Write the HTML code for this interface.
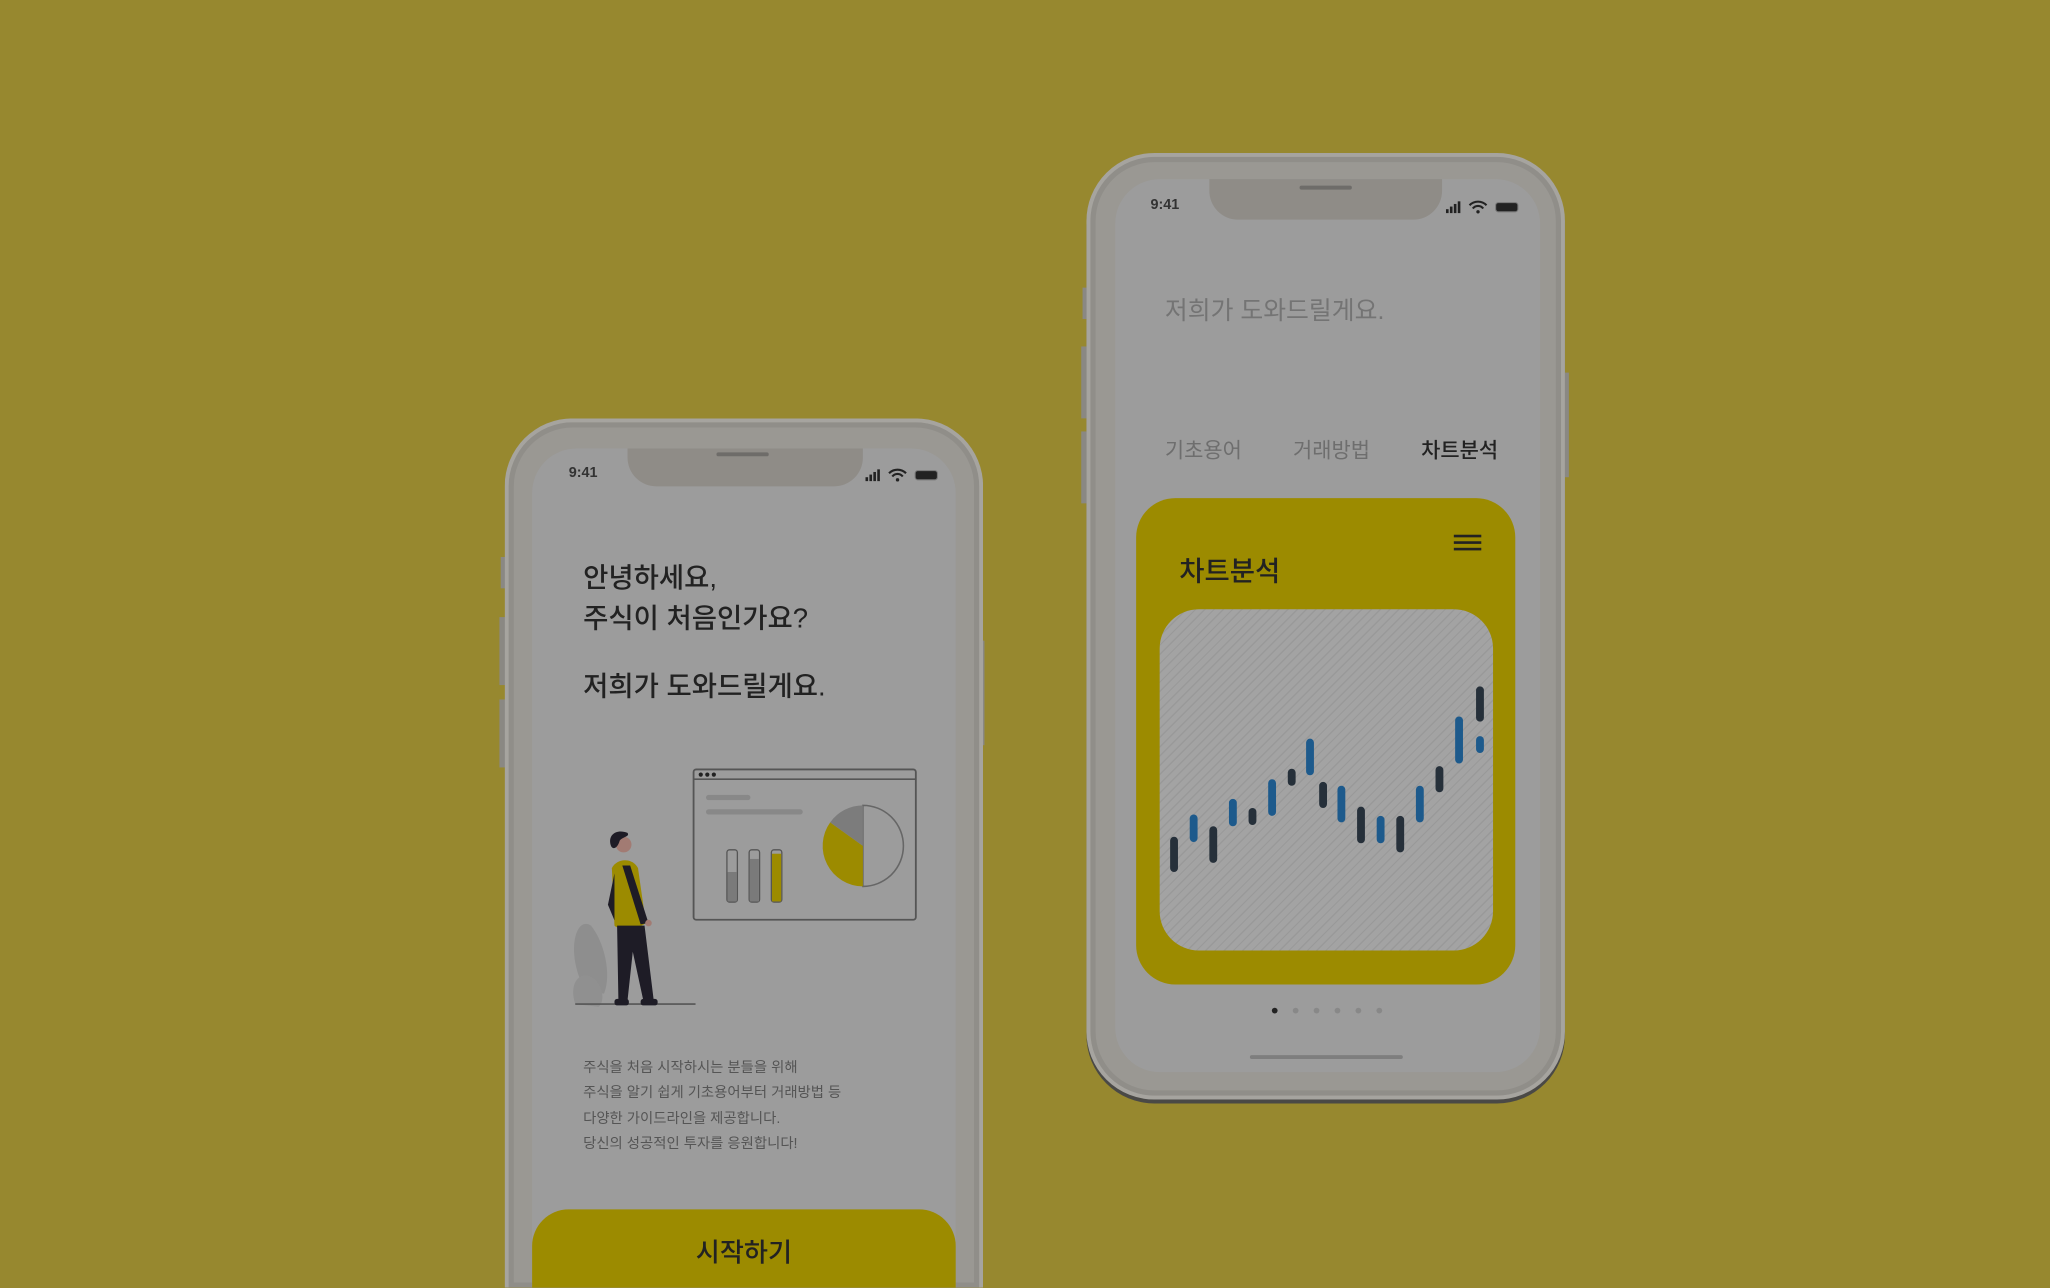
<!DOCTYPE html>
<html><head><meta charset="utf-8"><style>
*{margin:0;padding:0;box-sizing:border-box}
html,body{width:2050px;height:1288px;overflow:hidden;background:#97882f}
body{font-family:"Liberation Sans","Noto Sans CJK KR",sans-serif}
#clip{position:absolute;left:0;top:0;width:2050px;height:1288px;overflow:hidden}
#w{position:absolute;left:0;top:0;width:1568px;height:985px;overflow:hidden;transform:scale(1.30740);transform-origin:0 0}
.a{position:absolute}
.body{background:#9a9893;border:3px solid #a6a49f;box-shadow:inset 0 0 0 4px #908e89}
.scr{background:#9c9c9c;overflow:hidden}
.notch{background:#8f8c87;border-radius:0 0 22px 22px}
.spk{background:#6e6c69;height:3px;border-radius:2px}
.t{color:#222;white-space:nowrap}
</style></head><body><div id="clip"><div id="w">

<!-- LEFT PHONE -->
<div class="a" style="left:383px;top:426px;width:4px;height:24px;background:#8a8883"></div>
<div class="a" style="left:382px;top:472px;width:5px;height:52px;background:#8a8883"></div>
<div class="a" style="left:382px;top:535px;width:5px;height:52px;background:#8a8883"></div>
<div class="a" style="left:749px;top:490px;width:4px;height:80px;background:#8a8883"></div>
<div class="a body" style="left:386px;top:320px;width:366px;height:665px;border-radius:52px 52px 0 0;border-bottom:none"></div>
<div class="a scr" style="left:407px;top:343px;width:324px;height:642px;border-radius:34px 34px 0 0"></div>
<div class="a notch" style="left:480px;top:343px;width:180px;height:29px"></div>
<div class="a spk" style="left:548px;top:346px;width:40px"></div>
<div class="a t" style="left:435px;top:356px;font-size:11px;font-weight:bold;color:#333">9:41</div>
<svg class="a" style="left:660px;top:357px" width="62" height="12" viewBox="0 0 62 12">
<rect x="2" y="8" width="2" height="3" fill="#222"/><rect x="5" y="6" width="2" height="5" fill="#222"/><rect x="8" y="4" width="2" height="7" fill="#222"/><rect x="11" y="2" width="2" height="9" fill="#222"/>
<path d="M20 5 a9 9 0 0 1 13 0 M22.5 7.5 a5 5 0 0 1 8 0" stroke="#222" stroke-width="1.6" fill="none"/><circle cx="26.5" cy="10" r="1.3" fill="#222"/>
<rect x="40" y="3" width="17" height="7" rx="2" fill="#222" stroke="#777" stroke-width="0.8"/></svg>
<div class="a t" style="left:446px;top:427px;font-size:21px;line-height:31px;font-weight:500">안녕하세요,<br>주식이 처음인가요?</div>
<div class="a t" style="left:446px;top:509px;font-size:21px;font-weight:500">저희가 도와드릴게요.</div>

<svg class="a" style="left:432px;top:580px" width="280" height="195" viewBox="0 0 280 195">
<rect x="98.5" y="8.5" width="170" height="115" rx="2" fill="none" stroke="#555" stroke-width="1.4"/>
<line x1="99" y1="16" x2="268" y2="16" stroke="#555" stroke-width="1.2"/>
<circle cx="104" cy="12.5" r="1.6" fill="#222"/><circle cx="109" cy="12.5" r="1.6" fill="#222"/><circle cx="114" cy="12.5" r="1.6" fill="#222"/>
<rect x="108" y="28" width="34" height="4" rx="2" fill="#888"/><rect x="108" y="39" width="74" height="4" rx="2" fill="#888"/>
<rect x="124" y="70" width="8" height="40" rx="2" fill="#9c9c9c" stroke="#555"/><rect x="124.5" y="87" width="7" height="22.5" fill="#7a7a7a"/>
<rect x="141" y="70" width="8" height="40" rx="2" fill="#9c9c9c" stroke="#555"/><rect x="141.5" y="77" width="7" height="32.5" fill="#7a7a7a"/>
<rect x="158" y="70" width="8" height="40" rx="2" fill="#9c9c9c" stroke="#555"/><rect x="158.5" y="73" width="7" height="36.5" fill="#9c8b00"/>
<path d="M228 36 A31 31 0 0 1 228 98 Z" fill="#9c9c9c" stroke="#666" stroke-width="1.2"/>
<path d="M228 67 L228 98 A31 31 0 0 1 203 49 Z" fill="#9c8b00"/>
<path d="M228 67 L203 49 A31 31 0 0 1 228 36 Z" fill="#7c7c7c"/>
<path d="M16 178 C0 150 8 120 20 128 C30 140 36 165 30 180 Z" fill="#8e8e8e"/>
<path d="M8 188 C2 170 14 160 24 170 C30 178 30 186 26 190 Z" fill="#909090"/>
<line x1="8" y1="188" x2="100" y2="188" stroke="#555" stroke-width="1.2"/>
<circle cx="45" cy="66" r="6" fill="#a27b73"/>
<path d="M35 66 C33 58 40 54 48 57 C50 60 44 60 42 63 C40 70 36 70 35 66 Z" fill="#1e1c26"/>
<path d="M36 84 C40 76 52 76 56 84 L62 126 C54 132 42 132 38 128 Z" fill="#9c8b00"/>
<path d="M44 82 L50 82 L64 126 L58 127 Z" fill="#1e1c26"/>
<path d="M38 88 L33 112 L38 124 L38 90 Z" fill="#1e1c26"/>
<path d="M40 128 L61 128 L68 185 L60 185 L52 148 L48 185 L41 185 Z" fill="#1e1c26"/>
<rect x="38" y="184" width="11" height="5" rx="2" fill="#1e1c26"/><rect x="58" y="184" width="13" height="5" rx="2" fill="#1e1c26"/>
<circle cx="64" cy="126" r="2.5" fill="#a27b73"/>
</svg>

<div class="a" style="left:446px;top:808px;font-size:11px;line-height:19.3px;color:#555;white-space:nowrap">주식을 처음 시작하시는 분들을 위해<br>주식을 알기 쉽게 기초용어부터 거래방법 등<br>다양한 가이드라인을 제공합니다.<br>당신의 성공적인 투자를 응원합니다!</div>
<div class="a" style="left:407px;top:925px;width:324px;height:60px;background:#9c8b00;border-radius:28px 28px 0 0"></div>
<div class="a t" style="left:407px;top:942px;width:324px;text-align:center;font-size:20px;font-weight:500">시작하기</div>

<!-- RIGHT PHONE -->
<div class="a" style="left:828px;top:220px;width:5px;height:24px;background:#8a8883"></div>
<div class="a" style="left:827px;top:265px;width:6px;height:55px;background:#8a8883"></div>
<div class="a" style="left:827px;top:330px;width:6px;height:55px;background:#8a8883"></div>
<div class="a" style="left:1195px;top:285px;width:5px;height:80px;background:#8a8883"></div>
<div class="a body" style="left:831px;top:117px;width:366px;height:724px;border-radius:52px;box-shadow:inset 0 0 0 4px #908e89,0 3px 0 #4a4946"></div>
<div class="a scr" style="left:853px;top:137px;width:325px;height:683px;border-radius:34px"></div>
<div class="a notch" style="left:925px;top:137px;width:178px;height:31px"></div>
<div class="a spk" style="left:994px;top:142px;width:40px"></div>
<div class="a t" style="left:880px;top:151px;font-size:11px;font-weight:bold;color:#333">9:41</div>
<svg class="a" style="left:1104px;top:152px" width="62" height="12" viewBox="0 0 62 12">
<rect x="2" y="8" width="2" height="3" fill="#222"/><rect x="5" y="6" width="2" height="5" fill="#222"/><rect x="8" y="4" width="2" height="7" fill="#222"/><rect x="11" y="2" width="2" height="9" fill="#222"/>
<path d="M20 5 a9 9 0 0 1 13 0 M22.5 7.5 a5 5 0 0 1 8 0" stroke="#222" stroke-width="1.6" fill="none"/><circle cx="26.5" cy="10" r="1.3" fill="#222"/>
<rect x="40" y="3" width="17" height="7" rx="2" fill="#222" stroke="#777" stroke-width="0.8"/></svg>
<div class="a" style="left:891px;top:223px;font-size:19px;color:#747474;white-space:nowrap">저희가 도와드릴게요.</div>
<div class="a" style="left:891px;top:331px;font-size:16px;color:#6e6e6e;white-space:nowrap">기초용어</div>
<div class="a" style="left:989px;top:331px;font-size:16px;color:#6e6e6e;white-space:nowrap">거래방법</div>
<div class="a t" style="left:1087px;top:331px;font-size:16px;font-weight:500">차트분석</div>
<div class="a" style="left:869px;top:381px;width:290px;height:372px;background:#9c8b00;border-radius:30px"></div>
<div class="a" style="left:1112px;top:409px;width:21px;height:2px;background:#222;box-shadow:0 5px 0 #222,0 10px 0 #222"></div>
<div class="a t" style="left:902px;top:421px;font-size:21px;font-weight:500">차트분석</div>
<div class="a" style="left:887px;top:466px;width:255px;height:261px;border-radius:30px;background:repeating-linear-gradient(135deg,#a3a3a3 0 4px,#999 4px 5px)"></div>
<svg class="a" style="left:887px;top:466px" width="255" height="261" viewBox="887 466 255 261">
<g stroke-linecap="round" stroke-width="6">
<line x1="898" y1="643" x2="898" y2="664" stroke="#26303a"/>
<line x1="913" y1="626" x2="913" y2="641" stroke="#1d5a8c"/>
<line x1="928" y1="635" x2="928" y2="657" stroke="#26303a"/>
<line x1="943" y1="614" x2="943" y2="629" stroke="#1d5a8c"/>
<line x1="958" y1="621" x2="958" y2="628" stroke="#26303a"/>
<line x1="973" y1="599" x2="973" y2="621" stroke="#1d5a8c"/>
<line x1="988" y1="591" x2="988" y2="598" stroke="#26303a"/>
<line x1="1002" y1="568" x2="1002" y2="590" stroke="#1d5a8c"/>
<line x1="1012" y1="601" x2="1012" y2="615" stroke="#26303a"/>
<line x1="1026" y1="604" x2="1026" y2="626" stroke="#1d5a8c"/>
<line x1="1041" y1="620" x2="1041" y2="642" stroke="#26303a"/>
<line x1="1056" y1="627" x2="1056" y2="642" stroke="#1d5a8c"/>
<line x1="1071" y1="627" x2="1071" y2="649" stroke="#26303a"/>
<line x1="1086" y1="604" x2="1086" y2="626" stroke="#1d5a8c"/>
<line x1="1101" y1="589" x2="1101" y2="603" stroke="#26303a"/>
<line x1="1116" y1="551" x2="1116" y2="581" stroke="#1d5a8c"/>
<line x1="1132" y1="528" x2="1132" y2="549" stroke="#26303a"/>
<line x1="1132" y1="566" x2="1132" y2="573" stroke="#1d5a8c"/>
</g></svg>
<svg class="a" style="left:970px;top:769px" width="90" height="8" viewBox="0 0 90 8">
<circle cx="5" cy="4" r="2.2" fill="#222"/><circle cx="21" cy="4" r="2.2" fill="#888"/><circle cx="37" cy="4" r="2.2" fill="#888"/><circle cx="53" cy="4" r="2.2" fill="#888"/><circle cx="69" cy="4" r="2.2" fill="#888"/><circle cx="85" cy="4" r="2.2" fill="#888"/></svg>
<div class="a" style="left:956px;top:807px;width:117px;height:3px;border-radius:2px;background:#7e7e7e"></div>

</div></div></body></html>
